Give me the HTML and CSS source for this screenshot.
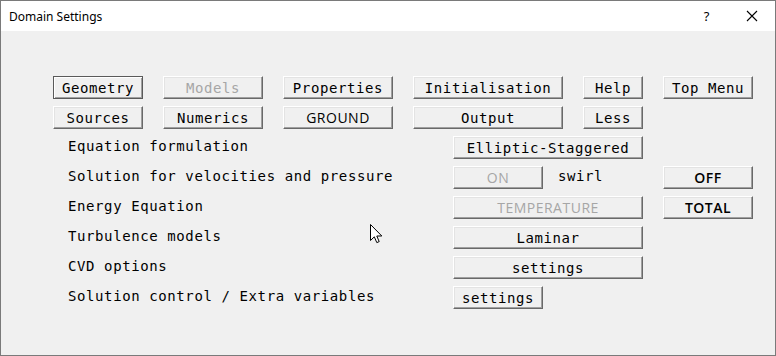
FILE: index.html
```html
<!DOCTYPE html>
<html lang="en">
<head>
    <meta charset="UTF-8">
    <title>Domain Settings</title>
    <link rel="stylesheet" href="styles.css">
</head>
<body>

    <div class="window">
        <!-- Title bar -->
        <div class="titlebar">
            <span class="title">Domain Settings</span>
            <span class="title-btn help-btn">?</span>
            <span class="title-btn close-btn">
                <svg width="12" height="12" viewBox="0 0 12 12">
                    <path d="M1 1 L11 11 M11 1 L1 11" stroke="#000" stroke-width="1.1" fill="none"/>
                </svg>
            </span>
        </div>

        <div class="content">
            <!-- top menu buttons -->
            <div class="toolbar">
                <button class="btn default">Geometry</button>
                <button class="btn" disabled>Models</button>
                <button class="btn">Properties</button>
                <button class="btn">Initialisation</button>
                <button class="btn">Help</button>
                <button class="btn">Top Menu</button>

                <button class="btn">Sources</button>
                <button class="btn">Numerics</button>
                <button class="btn sans">GROUND</button>
                <button class="btn">Output</button>
                <button class="btn">Less</button>
            </div>

            <!-- settings rows -->
            <div class="form">
                <div class="label">Equation formulation</div>
                <button class="btn span2">Elliptic-Staggered</button>

                <div class="label">Solution for velocities and pressure</div>
                <button class="btn sans" disabled>ON</button>
                <div class="label swirl">swirl</div>
                <button class="btn sans strong col4">OFF</button>

                <div class="label">Energy Equation</div>
                <button class="btn sans span2" disabled>TEMPERATURE</button>
                <button class="btn sans strong col4">TOTAL</button>

                <div class="label">Turbulence models</div>
                <button class="btn span2">Laminar</button>

                <div class="label">CVD options</div>
                <button class="btn span2">settings</button>

                <div class="label">Solution control / Extra variables</div>
                <button class="btn">settings</button>
            </div>
        </div>

        <!-- mouse pointer -->
        <svg class="cursor" width="13" height="20" viewBox="0 0 13 20">
            <path d="M0.5 0.5 L0.5 16.5 L4.3 12.8 L6.8 18.6 L9.2 17.6 L6.8 12 L11.8 12 Z" fill="#fff" stroke="#000" stroke-width="1"/>
        </svg>
    </div>

</body>
</html>
```

FILE: styles.css
```css
/* Window */
html, body {
    margin: 0;
    padding: 0;
    background: #f0f0f0;
}

.window {
    position: relative;
    width: 776px;
    height: 356px;
    box-sizing: border-box;
    border: 1px solid #7a7a7a;
    background: #f0f0f0;
    font-family: "DejaVu Sans Mono", monospace;
    font-size: 14px;
    letter-spacing: 0.6px;
    color: #000;
}

.titlebar {
    height: 30px;
    background: #fff;
    display: flex;
    align-items: center;
    font-family: "Noto Sans", sans-serif;
    font-size: 12px;
    letter-spacing: 0;
}

.title {
    padding-left: 8px;
    flex: 1;
}

.title-btn {
    width: 45px;
    text-align: center;
}

.help-btn {
    font-size: 13px;
}

.close-btn {
    display: flex;
    justify-content: center;
    margin-right: 1px;
}

/* Content */
.content {
    padding-top: 45px;
}

.toolbar {
    display: grid;
    grid-template-columns: 90px 100px 110px 150px 60px 90px;
    grid-auto-rows: 23px;
    column-gap: 20px;
    row-gap: 7px;
    padding-left: 52px;
}

.form {
    display: grid;
    grid-template-columns: 385px 90px 100px 20px 90px;
    grid-auto-rows: 23px;
    row-gap: 7px;
    margin-top: 7px;
    padding-left: 67px;
}

.label {
    grid-column: 1;
    align-self: center;
    margin-bottom: 4px;
    white-space: nowrap;
}

.label.swirl {
    grid-column: 3;
    padding-left: 15px;
}

.form .btn {
    grid-column: 2;
}

.form .btn.span2 {
    grid-column: 2 / span 2;
}

.form .btn.col4 {
    grid-column: 5;
}

/* Buttons */
.btn {
    font-family: inherit;
    font-size: 14px;
    letter-spacing: 0.6px;
    color: #000;
    height: 23px;
    padding: 0;
    margin: 0;
    background: #f0f0f0;
    border: 1px solid;
    border-color: #fff #696969 #696969 #fff;
    box-shadow: inset -1px -1px #a0a0a0, inset 1px 1px #e3e3e3;
    border-radius: 0;
}

.btn.default {
    border-color: #5a5a5a;
    box-shadow: inset 1px 1px #fff, inset -1px -1px #a0a0a0;
}

.btn.sans {
    font-family: "Open Sans", sans-serif;
    font-size: 14px;
    letter-spacing: 0.5px;
}

.btn.strong {
    font-weight: 600;
}

.btn:disabled {
    color: #a6a6a6;
}

.cursor {
    position: absolute;
    left: 369px;
    top: 223px;
}
```
